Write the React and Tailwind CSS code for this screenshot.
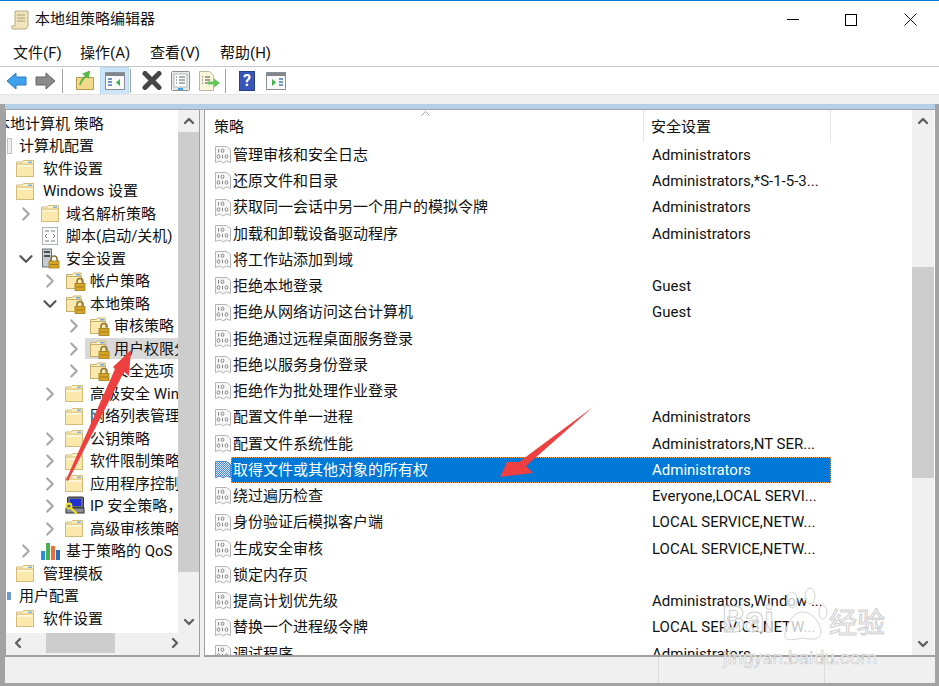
import { ChevronRight, ChevronDown, ChevronUp, ChevronLeft } from "lucide-react";

const treeRows = [
  { depth: "d1", icon: "folder", text: "软件设置" },
  { depth: "d1", icon: "folder", text: "Windows 设置" },
  { depth: "d2", icon: "folder", text: "域名解析策略", chevron: "right" },
  { depth: "d2", icon: "script", text: "脚本(启动/关机)" },
  { depth: "d2", icon: "server", text: "安全设置", chevron: "down" },
  { depth: "d3", icon: "lock", text: "帐户策略", chevron: "right" },
  { depth: "d3", icon: "lock", text: "本地策略", chevron: "down" },
  { depth: "d4", icon: "lock", text: "审核策略", chevron: "right" },
  { depth: "d4", icon: "lock", text: "用户权限分配", chevron: "right", selected: true },
  { depth: "d4", icon: "lock", text: "安全选项", chevron: "right" },
  { depth: "d3", icon: "folder", text: "高级安全 Windows", chevron: "right" },
  { depth: "d3", icon: "folder", text: "网络列表管理器" },
  { depth: "d3", icon: "folder", text: "公钥策略", chevron: "right" },
  { depth: "d3", icon: "folder", text: "软件限制策略", chevron: "right" },
  { depth: "d3", icon: "folder", text: "应用程序控制策略", chevron: "right" },
  { depth: "d3", icon: "ip", text: "IP 安全策略，在本地", chevron: "right" },
  { depth: "d3", icon: "folder", text: "高级审核策略配置", chevron: "right" },
  { depth: "d2", icon: "chart", text: "基于策略的 QoS", chevron: "right" },
  { depth: "d1", icon: "folder", text: "管理模板" },
];

const policyRows = [
  ["管理审核和安全日志", "Administrators"],
  ["还原文件和目录", "Administrators,*S-1-5-3..."],
  ["获取同一会话中另一个用户的模拟令牌", "Administrators"],
  ["加载和卸载设备驱动程序", "Administrators"],
  ["将工作站添加到域", ""],
  ["拒绝本地登录", "Guest"],
  ["拒绝从网络访问这台计算机", "Guest"],
  ["拒绝通过远程桌面服务登录", ""],
  ["拒绝以服务身份登录", ""],
  ["拒绝作为批处理作业登录", ""],
  ["配置文件单一进程", "Administrators"],
  ["配置文件系统性能", "Administrators,NT SER..."],
  ["取得文件或其他对象的所有权", "Administrators", true],
  ["绕过遍历检查", "Everyone,LOCAL SERVI..."],
  ["身份验证后模拟客户端", "LOCAL SERVICE,NETW..."],
  ["生成安全审核", "LOCAL SERVICE,NETW..."],
  ["锁定内存页", ""],
  ["提高计划优先级", "Administrators,Window ..."],
  ["替换一个进程级令牌", "LOCAL SERVICE,NETW..."],
  ["调试程序", "Administrators"],
];

const depthClass = { d1: "pl-[10px]", d2: "pl-[15px]", d3: "pl-[39px]", d4: "pl-[63px]" };

function FolderIcon() {
  return (
    <svg width="18" height="17" viewBox="0 0 18 17" className="mr-[2px] shrink-0">
      <path d="M0.5 4.5V2h6l1-1.5h10v4z" fill="#fdf3c8" stroke="#d4bd7c" />
      <rect x="12" y="1.5" width="4" height="1.5" fill="#7fb2e0" />
      <rect x="0.5" y="4" width="17" height="12.5" fill="#fbe8ac" stroke="#d4bb78" />
      <rect x="1.5" y="5" width="15" height="2" fill="#fdf5d6" />
    </svg>
  );
}

function LockFolderIcon() {
  return (
    <svg width="20" height="18" viewBox="0 0 20 18" className="shrink-0 overflow-visible">
      <path d="M1.5 4.5V2.5h6l1-1.5h7.5v3.5z" fill="#fdf3c8" stroke="#c9b06c" />
      <rect x="11" y="2" width="4" height="1.5" fill="#6fa8dc" />
      <rect x="1.5" y="4.5" width="15" height="12" fill="#fbe8ac" stroke="#c9ae66" />
      <path d="M12 11.5V9.5a3 3 0 0 1 6 0v2" fill="none" stroke="#8a7430" strokeWidth="1.5" />
      <rect x="10" y="11.5" width="10" height="7" fill="#d6a526" stroke="#a07c1c" strokeWidth="0.8" />
      <rect x="11" y="14.5" width="8" height="1" fill="#a07c1c" />
    </svg>
  );
}

function ScriptIcon() {
  return (
    <svg width="20" height="20" viewBox="0 0 20 20" className="shrink-0">
      <rect x="1.5" y="1.5" width="15" height="17" fill="#fafafa" stroke="#b0b4b8" />
      <path d="M4 5h4M10 5h4M6 8l-2 2 2 2M12 8l2 2-2 2M4 15h4M10 15h4" stroke="#7c8288" strokeWidth="1" fill="none" />
    </svg>
  );
}

function ServerLockIcon() {
  return (
    <svg width="20" height="22" viewBox="0 0 20 22" className="shrink-0 overflow-visible">
      <rect x="1.5" y="1" width="9" height="18" fill="#c8ccd0" stroke="#6c7278" />
      <rect x="3" y="3" width="6" height="2" fill="#4a5058" />
      <rect x="3" y="7" width="6" height="2" fill="#4a5058" />
      <path d="M10 13v-2a3 3 0 0 1 6 0v2" fill="none" stroke="#8a7430" strokeWidth="1.5" />
      <rect x="8" y="13" width="10" height="7" fill="#d6a526" stroke="#a07c1c" strokeWidth="0.8" />
      <rect x="9" y="16" width="8" height="1" fill="#a07c1c" />
    </svg>
  );
}

function IpIcon() {
  return (
    <svg width="20" height="20" viewBox="0 0 20 20" className="shrink-0 overflow-visible">
      <rect x="2.5" y="1" width="16" height="11" rx="1" fill="#6b7076" stroke="#2f3338" />
      <rect x="5" y="3" width="11" height="7" fill="#1f2fd0" />
      <rect x="1" y="12" width="18" height="5" fill="#8b9096" stroke="#2f3338" />
      <circle cx="4" cy="10" r="2.5" fill="none" stroke="#f1e22a" strokeWidth="1.8" />
      <path d="M6 12l6 6" stroke="#f1e22a" strokeWidth="2" />
    </svg>
  );
}

function ChartIcon() {
  return (
    <svg width="20" height="18" viewBox="0 0 20 18" className="shrink-0">
      <rect x="0" y="9" width="4" height="9" fill="#2a8fd8" />
      <rect x="5" y="1" width="4" height="17" fill="#4caf50" />
      <rect x="10" y="4" width="4" height="14" fill="#e8703a" />
      <rect x="15" y="8" width="4" height="10" fill="#2a6fc0" />
    </svg>
  );
}

function PolicyIcon({ selected }) {
  return (
    <svg width="18" height="20" viewBox="0 0 18 20" className="shrink-0">
      <defs>
        <pattern id="dither" width="2" height="2" patternUnits="userSpaceOnUse">
          <rect width="2" height="2" fill="#4f8bd6" />
          <rect width="1" height="1" fill="#d5e4f6" />
          <rect x="1" y="1" width="1" height="1" fill="#d5e4f6" />
        </pattern>
      </defs>
      <path
        d="M1.5 1.5h11l4 3v13l-4-1.5-3.5 2-3-2-4.5 1.5z"
        fill={selected ? "url(#dither)" : "#f7f7f7"}
        stroke={selected ? "#4f8bd6" : "#b5b5b5"}
      />
      {!selected && (
        <g fill="none" stroke="#868686" strokeWidth="1">
          <path d="M4.5 4v3.5" />
          <ellipse cx="8.5" cy="5.75" rx="1.4" ry="1.7" />
          <ellipse cx="4.5" cy="11.5" rx="1.4" ry="1.7" />
          <path d="M8.5 9.8v3.5" />
          <ellipse cx="12.5" cy="11.5" rx="1.4" ry="1.7" />
        </g>
      )}
    </svg>
  );
}

function TreeIcon({ type }) {
  if (type === "lock") return <LockFolderIcon />;
  if (type === "script") return <ScriptIcon />;
  if (type === "server") return <ServerLockIcon />;
  if (type === "ip") return <IpIcon />;
  if (type === "chart") return <ChartIcon />;
  return <FolderIcon />;
}

function TreeRow({ row }) {
  return (
    <div className={`flex h-[22.5px] items-center whitespace-nowrap ${depthClass[row.depth]}`}>
      {row.depth !== "d1" && (
        <span className="flex w-[20px] shrink-0 items-center">
          {row.chevron === "right" && (
            <ChevronRight size={22} strokeWidth={2.4} className="-ml-[6px] shrink-0 text-[#a8a8a8]" />
          )}
          {row.chevron === "down" && (
            <ChevronDown size={22} strokeWidth={2.4} className="-ml-[6px] shrink-0 text-[#555555]" />
          )}
        </span>
      )}
      <span className={`flex h-[21px] flex-1 items-center ${row.selected ? "-ml-[4px] bg-[#d9d9d9] pl-[4px]" : ""}`}>
        <TreeIcon type={row.icon} />
        <span className={row.depth === "d1" ? "ml-[7px]" : "ml-[5px]"}>{row.text}</span>
      </span>
    </div>
  );
}

function PolicyRow({ name, value, selected }) {
  return (
    <div className="flex h-[26.25px] items-center whitespace-nowrap pl-[9px]">
      <PolicyIcon selected={selected} />
      <div
        className={`-ml-px flex h-[26px] w-[600px] items-center border ${
          selected ? "border-dotted border-[#e8a050] bg-[#0078d7] text-white" : "border-transparent"
        }`}
      >
        <span className="w-[420px] pl-px">{name}</span>
        <span>{value}</span>
      </div>
    </div>
  );
}

function ToolSep() {
  return <span className="block h-[24px] w-px bg-[#a0a0a0]" />;
}

function BackIcon({ flip, fill, stroke }) {
  return (
    <svg width="21" height="18" viewBox="0 0 21 18" className={flip ? "-scale-x-100" : ""}>
      <path d="M1 9l9-8v4h10v8H10v4z" fill={fill} stroke={stroke} strokeLinejoin="round" />
    </svg>
  );
}

function PaneIcon({ right }) {
  return (
    <svg width="20" height="18" viewBox="0 0 20 18">
      <rect x="0.5" y="0.5" width="19" height="17" fill="#fafafa" stroke="#8a9096" />
      <rect x="1" y="1" width="18" height="3" fill="#7f868c" />
      {right ? (
        <g>
          <path d="M6 7v7l4-3.5z" fill="#3fb44a" />
          <path d="M13 7h4M13 10h4M13 13h4" stroke="#4a78b0" strokeWidth="1.5" />
        </g>
      ) : (
        <g>
          <path d="M3 7h4M3 10h4M3 13h4" stroke="#4a78b0" strokeWidth="1.5" />
          <path d="M15 7v7l-4-3.5z" fill="#3fb44a" />
        </g>
      )}
    </svg>
  );
}

function Toolbar() {
  return (
    <div className="flex h-[28px] items-center border-t border-[#c8c8c8] pl-[6px]">
      <BackIcon fill="#3ea2ee" stroke="#2a7cc4" />
      <span className="ml-[8px]">
        <BackIcon flip fill="#8a8a8a" stroke="#666666" />
      </span>
      <span className="ml-[6px]"><ToolSep /></span>
      <svg width="18" height="19" viewBox="0 0 18 19" className="ml-[13px]">
        <path d="M0.5 6.5h17v12H0.5z" fill="#f3d98c" stroke="#b8994e" />
        <path d="M4 14c1-4 3-7 6-9M8 3l5-2-1 5z" stroke="#5cb84a" strokeWidth="2" fill="#5cb84a" />
      </svg>
      <span className="ml-[6px] flex h-[28px] w-[29px] items-center justify-center border border-[#b8daf5] bg-[#cce4f7]">
        <PaneIcon />
      </span>
      <span className="ml-[1px]"><ToolSep /></span>
      <svg width="20" height="19" viewBox="0 0 20 19" className="ml-[11px]">
        <path d="M3 2.5l14 14M17 2.5l-14 14" stroke="#454545" strokeWidth="5" strokeLinecap="round" />
      </svg>
      <svg width="19" height="20" viewBox="0 0 19 20" className="ml-[9px]">
        <rect x="0.5" y="0.5" width="18" height="19" rx="1" fill="#e8e8e8" stroke="#8a8f94" />
        <rect x="3" y="3" width="13" height="13" fill="#ffffff" stroke="#b0b4b8" />
        <path d="M5 6h1M8 6h6M5 9h1M8 9h6M5 12h1M8 12h6" stroke="#5a6068" />
        <rect x="7" y="17" width="5" height="2" fill="#3ea2ee" />
      </svg>
      <svg width="21" height="20" viewBox="0 0 21 20" className="ml-[9px]">
        <path d="M0.5 0.5h10l4 4v15H0.5z" fill="#fbf6dc" stroke="#b8b8a0" />
        <path d="M3 6h1M6 6h5M3 9h1M6 9h5M3 12h1M6 12h5" stroke="#4a4a4a" />
        <path d="M9 10.5h6v-3l6 4.5-6 4.5v-3H9z" fill="#62c65a" />
      </svg>
      <span className="ml-[5px]"><ToolSep /></span>
      <span className="ml-[13px] flex h-[20px] w-[16px] items-center justify-center border border-[#24408c] bg-[#3856b8] text-[16px] font-bold leading-none text-white">
        ?
      </span>
      <span className="ml-[11px]"><PaneIcon right /></span>
    </div>
  );
}

function Overlay() {
  return (
    <>
      <svg width="939" height="686" viewBox="0 0 939 686" className="pointer-events-none absolute left-0 top-0">
        <polygon points="66,480 115,369 113,367 131,350 129,376 124,372 68,481" fill="#ee4040" />
        <polygon points="593,407 519,462 507,462 500,477 533,473 526,466" fill="#ee4040" />
        <g fill="#ffffff" fillOpacity="0.75" stroke="#d4d4d4" strokeWidth="1">
          <ellipse cx="792" cy="600" rx="5" ry="8" />
          <ellipse cx="810" cy="596" rx="5" ry="8" />
          <ellipse cx="823" cy="612" rx="4" ry="7" />
          <path d="M785 634c2-14 10-22 18-22s18 10 18 20c0 8-10 8-18 6-8 2-20 4-18-4z" />
        </g>
      </svg>
      <span className="pointer-events-none absolute left-[722px] top-[602px] text-[36px] font-bold leading-none text-white/80 [-webkit-text-stroke:1px_#d0d0d0]">
        Bai
      </span>
      <span className="pointer-events-none absolute left-[829px] top-[610px] text-[28px] leading-none text-white/80 [-webkit-text-stroke:1px_#d0d0d0]">
        经验
      </span>
      <span className="pointer-events-none absolute left-[723px] top-[648px] text-[19px] leading-none text-white/80 [-webkit-text-stroke:0.6px_#c8c8c8]">
        jingyan.baidu.com
      </span>
    </>
  );
}

export default function App() {
  return (
    <div className="relative flex h-[686px] w-[939px] flex-col overflow-hidden bg-white font-['Roboto','Noto_Sans_CJK_SC',sans-serif] text-[15px] text-[#111111]">
      <div className="flex h-[38px] items-center border-t border-[#0078d7] pl-[11px]">
        <svg width="18" height="20" viewBox="0 0 18 20">
          <path d="M4 1h13v14c0 2-1 4-3 4H2c-1 0-2-1-1-3h3z" fill="#efe4bc" stroke="#b8ab80" />
          <path d="M6 5h8M6 8h8M6 11h8" stroke="#a89c78" />
        </svg>
        <span className="ml-[6px]">本地组策略编辑器</span>
        <div className="ml-auto flex items-center">
          <span className="block h-px w-[12px] bg-black" />
          <span className="ml-[46px] block h-[12px] w-[12px] border border-black" />
          <svg width="13" height="13" viewBox="0 0 13 13" className="ml-[47px] mr-[22px]">
            <path d="M0.5 0.5l12 12M12.5 0.5l-12 12" stroke="#111111" strokeWidth="1" />
          </svg>
        </div>
      </div>

      <div className="flex h-[28px] items-center pl-[13px] pt-[2px]">
        <span className="w-[67px]">文件(F)</span>
        <span className="w-[70px]">操作(A)</span>
        <span className="w-[70px]">查看(V)</span>
        <span>帮助(H)</span>
      </div>

      <Toolbar />

      <div className="h-[10px] border-t border-[#e4e4e4] bg-[#f0f0f0]" />

      <div className="flex min-h-0 flex-1 bg-[#f0f0f0]">
        <div className="w-[5px] bg-[#a3a3a3]" />
        <div className="flex w-[930px] min-w-0 flex-col">
          <div className="h-[6px] border-b border-[#9aa4ae] bg-[#b6cfe8]" />
          <div className="flex h-[547px]">
            <div className="flex w-[195px] flex-col border-b-2 border-l border-r border-[#a0a0a0] bg-white">
              <div className="flex min-h-0 flex-1">
                <div className="min-w-0 flex-1 overflow-hidden pt-[2.5px]">
                  <div className="flex h-[22.5px] items-center whitespace-nowrap">
                    <span className="-ml-[11px]">本地计算机 策略</span>
                  </div>
                  <div className="flex h-[22.5px] items-center whitespace-nowrap pl-px">
                    <span className="h-[16px] w-[5px] shrink-0 border border-[#c0c0c0] bg-[#f0f0f0]" />
                    <span className="ml-[7px]">计算机配置</span>
                  </div>
                  {treeRows.map((row) => (
                    <TreeRow key={row.text} row={row} />
                  ))}
                  <div className="flex h-[22.5px] items-center whitespace-nowrap pl-px">
                    <span className="h-[8px] w-[4px] shrink-0 bg-[#6f9ad0]" />
                    <span className="ml-[8px]">用户配置</span>
                  </div>
                  <TreeRow row={{ depth: "d1", icon: "folder", text: "软件设置" }} />
                </div>
                <div className="flex w-[21px] shrink-0 flex-col bg-[#f0f0f0]">
                  <div className="flex h-[22px] items-center justify-center">
                    <ChevronUp size={16} strokeWidth={3.5} className="text-[#606060]" />
                  </div>
                  <div className="h-[440px] bg-[#cdcdcd]" />
                  <div className="mt-auto flex h-[22px] items-center justify-center">
                    <ChevronDown size={16} strokeWidth={3.5} className="text-[#606060]" />
                  </div>
                </div>
              </div>
              <div className="flex h-[22px] shrink-0 bg-[#f0f0f0]">
                <span className="flex h-[20px] w-[40px] items-center pl-[4px]">
                  <ChevronLeft size={16} strokeWidth={3.5} className="text-[#606060]" />
                </span>
                <span className="h-[20px] w-[69px] bg-[#cdcdcd]" />
                <span className="ml-auto mr-[16px] flex h-[20px] items-center">
                  <ChevronRight size={16} strokeWidth={3.5} className="text-[#606060]" />
                </span>
              </div>
            </div>

            <div className="ml-[4px] flex w-[731px] border-b-2 border-l border-[#a0a0a0] bg-white">
              <div className="min-w-0 flex-1 overflow-hidden">
                <div className="relative flex h-[32px] w-[626px] items-center border-r border-[#e5e5e5] pt-[3px]">
                  <span className="pl-[9px]">策略</span>
                  <span className="absolute left-[216px] top-[1px] h-[5px] w-[9px]">
                    <svg width="9" height="5" viewBox="0 0 9 5">
                      <path d="M0.5 4.5l4-4 4 4" fill="none" stroke="#a0a0a0" />
                    </svg>
                  </span>
                  <span className="absolute left-[438px] top-0 h-full w-px bg-[#e5e5e5]" />
                  <span className="absolute left-[446px]">安全设置</span>
                </div>
                {policyRows.map((row) => (
                  <PolicyRow key={row[0]} name={row[0]} value={row[1]} selected={row[2]} />
                ))}
              </div>
              <div className="flex w-[22px] shrink-0 flex-col bg-[#f0f0f0]">
                <div className="flex h-[22px] items-center justify-center">
                  <ChevronUp size={16} strokeWidth={3.5} className="text-[#606060]" />
                </div>
                <div className="mt-[135px] h-[211px] bg-[#cdcdcd]" />
                <div className="mt-auto flex h-[22px] items-center justify-center">
                  <ChevronDown size={16} strokeWidth={3.5} className="text-[#606060]" />
                </div>
              </div>
              <div className="w-px bg-white" />
            </div>
          </div>
          <div className="flex h-[26px] shrink-0 bg-[#f0f0f0]">
            <div className="h-full w-[654px] border-r border-[#dcdcdc]" />
            <div className="h-full w-[166px] border-r border-[#dcdcdc]" />
          </div>
          <div className="h-[3px] shrink-0 bg-[#a3a3a3]" />
        </div>
        <div className="w-[4px] bg-[#a3a3a3]" />
      </div>

      <Overlay />
    </div>
  );
}
